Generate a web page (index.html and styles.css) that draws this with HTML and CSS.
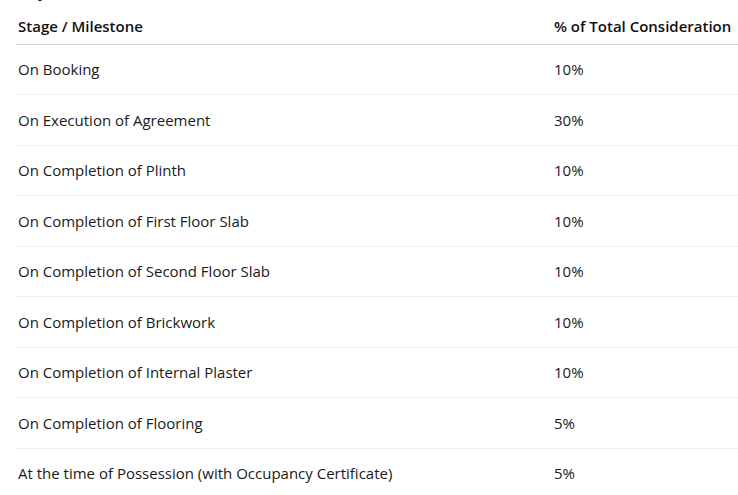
FILE: index.html
```html
<!DOCTYPE html>
<html lang="en">
<head>
<meta charset="utf-8">
<title>Payment Plan</title>
<link rel="stylesheet" href="styles.css">
</head>
<body>
<section class="plan">
  <h3 class="plan-title">Payment Plan</h3>
  <table class="schedule">
    <thead>
      <tr><th class="stage">Stage / Milestone</th><th class="pct">% of Total Consideration</th></tr>
    </thead>
    <tbody>
      <tr><td class="stage">On Booking</td><td class="pct">10%</td></tr>
      <tr><td class="stage">On Execution of Agreement</td><td class="pct">30%</td></tr>
      <tr><td class="stage">On Completion of Plinth</td><td class="pct">10%</td></tr>
      <tr><td class="stage">On Completion of First Floor Slab</td><td class="pct">10%</td></tr>
      <tr><td class="stage">On Completion of Second Floor Slab</td><td class="pct">10%</td></tr>
      <tr><td class="stage">On Completion of Brickwork</td><td class="pct">10%</td></tr>
      <tr><td class="stage">On Completion of Internal Plaster</td><td class="pct">10%</td></tr>
      <tr><td class="stage">On Completion of Flooring</td><td class="pct">5%</td></tr>
      <tr><td class="stage">At the time of Possession (with Occupancy Certificate)</td><td class="pct">5%</td></tr>
    </tbody>
  </table>
</section>
</body>
</html>
```
FILE: styles.css
```css
html, body {
  margin: 0;
  padding: 0;
  overflow: hidden;
  background: #ffffff;
}
body {
  font-family: "Open Sans", "Noto Sans", sans-serif;
  font-size: 15px;
  color: #1a1a1a;
}
.plan {
  padding: 0 0 0 16px;
}
.plan-title {
  font-size: 16px;
  font-weight: 700;
  line-height: 22px;
  margin: -20px 0 5.5px 2px;
  color: #111;
}
.schedule {
  border-collapse: collapse;
  width: 740px;
  table-layout: fixed;
}
.schedule th,
.schedule td {
  text-align: left;
  line-height: 20.5px;
  padding: 14.5px 0 14.5px 2px;
}
.schedule .stage { width: 534px; }
.schedule th {
  font-weight: 600;
  color: #111;
  padding-top: 8px;
  padding-bottom: 7.5px;
  border-bottom: 1px solid #d4d4d4;
}
.schedule td {
  border-bottom: 1px solid #efefef;
}
```
